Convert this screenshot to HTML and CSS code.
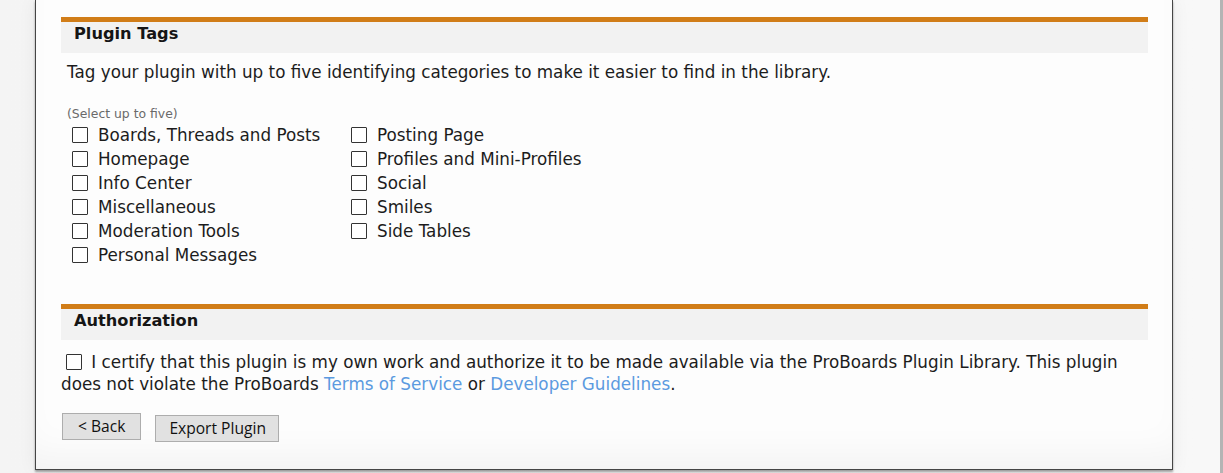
FILE: index.html
```html
<!DOCTYPE html>
<html>
<head>
<meta charset="utf-8">
<link rel="stylesheet" href="styles.css">
</head>
<body>
<div class="page">
  <div class="panel">
    <section class="section">
      <h2 class="section-head">Plugin Tags</h2>
      <p class="desc">Tag your plugin with up to five identifying categories to make it easier to find in the library.</p>
      <div class="hint">(Select up to five)</div>
      <div class="tags">
        <div class="tag-col first">
          <label class="tag"><input type="checkbox" class="box"><span>Boards, Threads and Posts</span></label>
          <label class="tag"><input type="checkbox" class="box"><span>Homepage</span></label>
          <label class="tag"><input type="checkbox" class="box"><span>Info Center</span></label>
          <label class="tag"><input type="checkbox" class="box"><span>Miscellaneous</span></label>
          <label class="tag"><input type="checkbox" class="box"><span>Moderation Tools</span></label>
          <label class="tag"><input type="checkbox" class="box"><span>Personal Messages</span></label>
        </div>
        <div class="tag-col">
          <label class="tag"><input type="checkbox" class="box"><span>Posting Page</span></label>
          <label class="tag"><input type="checkbox" class="box"><span>Profiles and Mini-Profiles</span></label>
          <label class="tag"><input type="checkbox" class="box"><span>Social</span></label>
          <label class="tag"><input type="checkbox" class="box"><span>Smiles</span></label>
          <label class="tag"><input type="checkbox" class="box"><span>Side Tables</span></label>
        </div>
      </div>
    </section>
    <section class="section auth">
      <h2 class="section-head">Authorization</h2>
      <p class="certify"><input type="checkbox" class="box inline"> I certify that this plugin is my own work and authorize it to be made available via the ProBoards Plugin Library. This plugin does not violate the ProBoards <a href="#">Terms of Service</a> or <a href="#">Developer Guidelines</a>.</p>
      <div class="actions">
        <button class="btn back">&lt; Back</button>
        <button class="btn export">Export Plugin</button>
      </div>
    </section>
  </div>
</div>
</body>
</html>
```
FILE: styles.css
```css
html, body {
  margin: 0;
  padding: 0;
}
body {
  background: #f7f7f7;
  font-family: "DejaVu Sans", Verdana, sans-serif;
  color: #1c1c1c;
  width: 1223px;
  height: 473px;
  overflow: hidden;
}
.page {
  height: 473px;
  box-sizing: border-box;
  border-right: 3px solid #b4b4b4;
  background: linear-gradient(to right, #f4f4f4 0px, #f8f8f8 1200px);
}
.panel {
  margin-left: 35px;
  width: 1087px;
  height: 452px;
  border: 1px solid #454545;
  border-top: none;
  background: #fdfdfd;
  box-shadow: 0 2px 2px rgba(0,0,0,0.35), 0 0 18px rgba(0,0,0,0.06), inset 0 -30px 40px -20px rgba(0,0,0,0.05);
  padding: 17px 24px 0 25px;
  box-sizing: content-box;
}
.section-head {
  margin: 0;
  border-top: 5px solid #d17d18;
  background: #f2f2f2;
  height: 31px;
  line-height: 24px;
  padding-left: 13px;
  font-size: 16.2px;
  font-weight: bold;
  color: #151515;
}
.desc {
  margin: 8px 0 0 6px;
  font-size: 16.8px;
  line-height: 22px;
}
.hint {
  margin: 23px 0 0 6px;
  font-size: 12.4px;
  line-height: 16px;
  color: #6a6a6a;
}
.tags {
  display: flex;
  padding-left: 11px;
  margin-top: 1px;
}
.tag-col {
  display: flex;
  flex-direction: column;
}
.tag-col.first {
  width: 279px;
}
.tag {
  display: flex;
  align-items: center;
  height: 24px;
  font-size: 16.8px;
  gap: 10px;
}
.box {
  appearance: none;
  -webkit-appearance: none;
  margin: 0;
  width: 16px;
  height: 16px;
  border: 1px solid #333;
  border-radius: 1px;
  background: #fff;
  box-sizing: border-box;
  flex: none;
}
.auth {
  margin-top: 37px;
}
.certify {
  margin: 11px 0 0 0;
  font-size: 16.8px;
  line-height: 22px;
}
.box.inline {
  vertical-align: -2px;
  margin: 0 4px 0 5px;
}
.certify a {
  color: #5b9ae0;
  text-decoration: none;
}
.actions {
  margin-top: 18px;
  display: flex;
  align-items: flex-end;
  gap: 14px;
  padding-left: 1px;
}
.btn {
  font-family: "Open Sans", sans-serif;
  font-size: 15.6px;
  color: #111;
  background: #e1e1e1;
  border: 1px solid #adadad;
  border-radius: 0;
  height: 27px;
  padding: 0 14px;
  line-height: 25px;
}
.btn.back {
  padding: 0 15px;
}
.btn.export {
  padding: 0 12px 0 13px;
  margin-bottom: -2px;
}
```
